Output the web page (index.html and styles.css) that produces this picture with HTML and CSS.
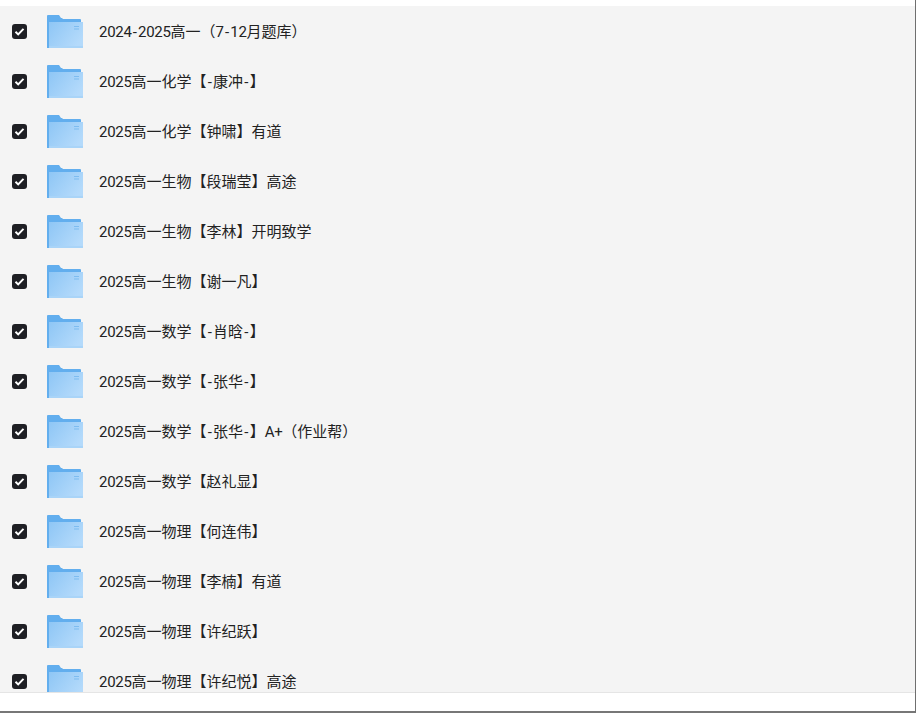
FILE: index.html
```html
<!DOCTYPE html>
<html lang="zh-CN">

<head>
	<meta charset="UTF-8" />
	<title>文件列表</title>
	<link rel="stylesheet" href="styles.css">
</head>

<body>
	<svg class="icon-defs" width="0" height="0">
		<defs>
			<linearGradient id="folderFront" x1="0" y1="0" x2="1" y2="0.6">
				<stop offset="0" stop-color="#8ec6f5" />
				<stop offset="1" stop-color="#b4dafb" />
			</linearGradient>
			<symbol id="folder" viewBox="0 0 36 33">
				<path d="M0 1a1 1 0 0 1 1-1h11l2 3h1l1 1h17a1 1 0 0 1 1 1v3H2v25H0z" fill="#62aeee" />
				<path d="M2 7h32v26H2z" fill="#62aeee" />
				<path d="M2 7h34v26H2z" fill="url(#folderFront)" />
				<path d="M2 31h34v2H2z" fill="#a9d4f8" />
				<path d="M27 11h5v1h-5zM27 13.500h5v1h-5z" fill="#7dbcf0" />
			</symbol>
			<symbol id="check" viewBox="0 0 15 15">
				<rect width="15" height="15" rx="3" fill="#1e1f24" />
				<path d="M3.500 7.800l2.700 2.600 5.300-5.500" fill="none" stroke="#fff" stroke-width="2" />
			</symbol>
		</defs>
	</svg>

	<div class="file-list" id="fileList"></div>
	<div class="footer-bar"></div>

	<script>
		const fileList = document.getElementById('fileList');

		const names = [
			'2024-2025高一（7-12月题库）',
			'2025高一化学【-康冲-】',
			'2025高一化学【钟啸】有道',
			'2025高一生物【段瑞莹】高途',
			'2025高一生物【李林】开明致学',
			'2025高一生物【谢一凡】',
			'2025高一数学【-肖晗-】',
			'2025高一数学【-张华-】',
			'2025高一数学【-张华-】A+（作业帮）',
			'2025高一数学【赵礼显】',
			'2025高一物理【何连伟】',
			'2025高一物理【李楠】有道',
			'2025高一物理【许纪跃】',
			'2025高一物理【许纪悦】高途'
		];

		// digits run a bit narrow and hyphens a bit wide next to the CJK text
		function markLatin(name) {
			return name.replace(/[0-9A+]+|-/g, m =>
				m === '-' ? '<span class="dash">-</span>' : `<span class="latin">${m}</span>`);
		}

		names.forEach(name => {
			const row = document.createElement('div');
			row.classList.add('file-row');
			row.innerHTML = `
				<svg class="checkbox"><use href="#check" /></svg>
				<svg class="folder"><use href="#folder" /></svg>
				<span class="file-name">${markLatin(name)}</span>`;
			fileList.appendChild(row);
		});
	</script>
</body>

</html>
```

FILE: styles.css
```css
* {
	box-sizing: border-box;
	margin: 0;
	padding: 0;
}

html,
body {
	height: 100%;
	overflow: hidden;
}

body {
	font-family: Roboto, "Noto Sans CJK SC", sans-serif;
	background: white;
	padding-top: 6px;
	display: flex;
	flex-direction: column;
	border-right: 1px solid #6f6f6f;
	border-bottom: 2px solid #777;
}

.icon-defs {
	position: absolute;
}

.file-list {
	height: 686px;
	overflow: hidden;
	background: #f4f4f4;
}

.file-row {
	height: 50px;
	display: flex;
	align-items: center;
	padding-left: 12px;
}

.checkbox {
	width: 15px;
	height: 15px;
	flex-shrink: 0;
}

.folder {
	width: 36px;
	height: 33px;
	margin-left: 20px;
	flex-shrink: 0;
}

.file-name {
	margin-left: 16px;
	margin-bottom: 2px;
	font-size: 15px;
	color: #222;
}

.latin {
	letter-spacing: -0.3px;
}

.dash {
	padding: 0 1.2px;
}

.footer-bar {
	flex: 1;
	border-top: 1px solid #e5e5e5;
}
```
